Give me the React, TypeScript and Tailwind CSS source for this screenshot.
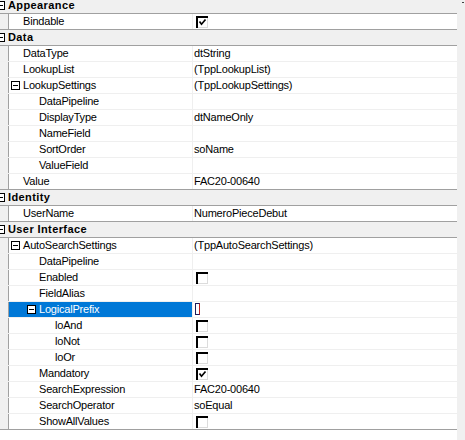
type Row = {
  label: string;
  cat?: boolean;
  level?: number;
  value?: string;
  check?: boolean;
  expanded?: boolean;
  selected?: boolean;
  caret?: boolean;
};

const rows: Row[] = [
  { label: "Appearance", cat: true },
  { label: "Bindable", level: 1, check: true },
  { label: "Data", cat: true },
  { label: "DataType", level: 1, value: "dtString" },
  { label: "LookupList", level: 1, value: "(TppLookupList)" },
  { label: "LookupSettings", level: 1, expanded: true, value: "(TppLookupSettings)" },
  { label: "DataPipeline", level: 2 },
  { label: "DisplayType", level: 2, value: "dtNameOnly" },
  { label: "NameField", level: 2 },
  { label: "SortOrder", level: 2, value: "soName" },
  { label: "ValueField", level: 2 },
  { label: "Value", level: 1, value: "FAC20-00640" },
  { label: "Identity", cat: true },
  { label: "UserName", level: 1, value: "NumeroPieceDebut" },
  { label: "User Interface", cat: true },
  { label: "AutoSearchSettings", level: 1, expanded: true, value: "(TppAutoSearchSettings)" },
  { label: "DataPipeline", level: 2 },
  { label: "Enabled", level: 2, check: false },
  { label: "FieldAlias", level: 2 },
  { label: "LogicalPrefix", level: 2, expanded: true, selected: true, caret: true },
  { label: "loAnd", level: 3, check: false },
  { label: "loNot", level: 3, check: false },
  { label: "loOr", level: 3, check: false },
  { label: "Mandatory", level: 2, check: true },
  { label: "SearchExpression", level: 2, value: "FAC20-00640" },
  { label: "SearchOperator", level: 2, value: "soEqual" },
  { label: "ShowAllValues", level: 2, check: false },
];

function Expander() {
  return (
    <svg width="9" height="9" viewBox="0 0 9 9" className="shrink-0">
      <rect x="0.5" y="0.5" width="8" height="8" fill="#ffffff" stroke="#000000" />
      <rect x="2" y="4" width="5" height="1" fill="#000000" />
    </svg>
  );
}

function CheckBox({ checked }: { checked: boolean }) {
  return (
    <svg width="12" height="12" viewBox="0 0 12 12" className="ml-[2px] shrink-0">
      <rect x="0" y="0" width="12" height="12" fill="#ffffff" />
      <rect x="11" y="2" width="1" height="10" fill="#dcdcdc" />
      <rect x="2" y="11" width="10" height="1" fill="#dcdcdc" />
      <rect x="0" y="0" width="12" height="2" fill="#000000" />
      <rect x="0" y="0" width="2" height="12" fill="#000000" />
      {checked && (
        <polyline points="3.5,5.5 5.5,8.2 9.5,3.5" fill="none" stroke="#000000" strokeWidth="1.7" />
      )}
    </svg>
  );
}

export default function App() {
  return (
    <div
      className="flex h-[440px] w-[465px] overflow-hidden bg-white text-[11px] text-black"
      style={{ fontFamily: '"Liberation Sans", Arial, sans-serif' }}
    >
      <div className="mt-[-2px] w-[457px] overflow-hidden">
        {rows.map((r, i) => {
          const next = rows[i + 1];
          const dark = r.cat || (next && next.cat) || !next;
          const border = dark ? "border-[#a0a0a0]" : "border-[#efefef]";
          if (r.cat) {
            return (
              <div
                key={i}
                className={`flex h-[16px] items-center gap-[3px] border-b bg-[#f0f0f0] ${border}`}
              >
                <div className="ml-[-4px] flex">
                  <Expander />
                </div>
                <span className="font-bold leading-[15px] tracking-[0.4px]">{r.label}</span>
              </div>
            );
          }
          const level = r.level ?? 1;
          const indent = 2 + 16 * (level - 1);
          return (
            <div key={i} className={`flex h-[16px] border-b ${border}`}>
              <div className="w-[9px] shrink-0 border-r border-[#a0a0a0] bg-[#f0f0f0]" />
              <div
                className={`flex w-[183px] shrink-0 items-center ${
                  r.selected ? "bg-[#0078d7] text-white" : ""
                }`}
                style={{ paddingLeft: r.expanded ? indent : indent + 12 }}
              >
                {r.expanded && (
                  <div className="mr-[3px] flex">
                    <Expander />
                  </div>
                )}
                <span className="leading-[15px] tracking-[-0.2px]">{r.label}</span>
              </div>
              <div className="w-px shrink-0 bg-[#efefef]" />
              <div className="flex flex-1 items-start pl-px">
                {r.check !== undefined && (
                  <div className="pt-[2px]">
                    <CheckBox checked={r.check} />
                  </div>
                )}
                {r.value && <span className="leading-[15px] tracking-[-0.2px]">{r.value}</span>}
                {r.caret && (
                  <div className="ml-[1px] mt-[1px] h-[12px] w-[5px] border border-[#1c1c5a] border-r-[#c02020]" />
                )}
              </div>
            </div>
          );
        })}
      </div>
      <div className="relative flex-1 bg-[#f0f0f0]">
        <div className="absolute right-[1px] top-[2px] h-px w-[2px] bg-[#404040]" />
      </div>
    </div>
  );
}
